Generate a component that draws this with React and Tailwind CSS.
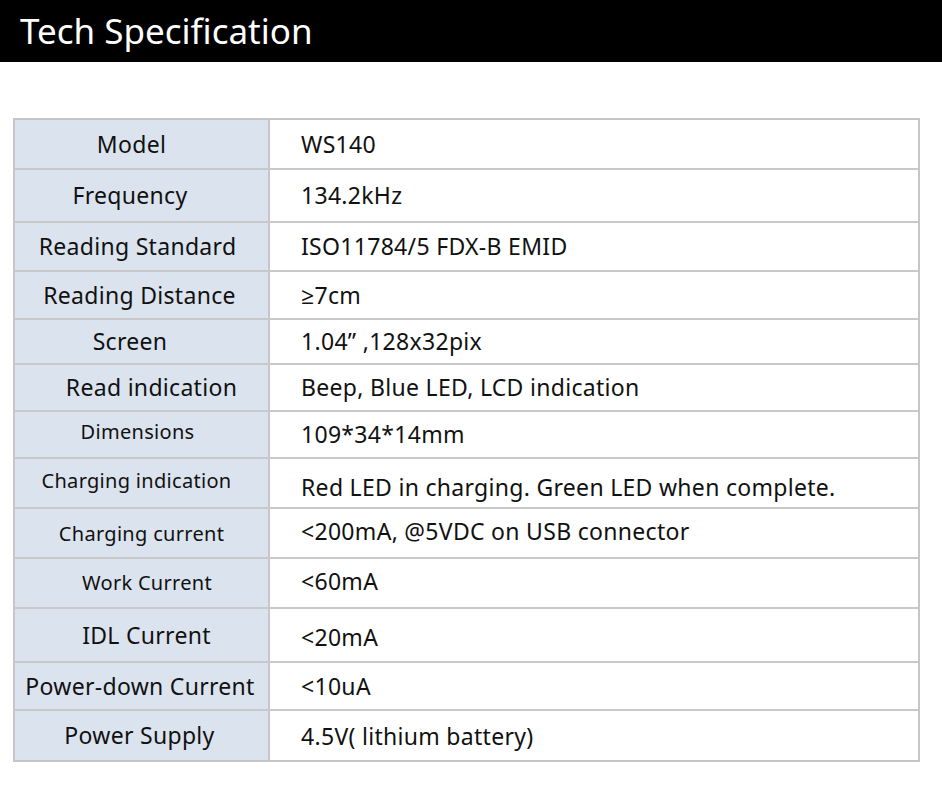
const specs = [
  { label: 'Model', value: 'WS140', h: 'h-[48px]', ls: 'text-[23px] pr-[20px]' },
  { label: 'Frequency', value: '134.2kHz', h: 'h-[53px]', ls: 'text-[23px] pr-[23px]' },
  { label: 'Reading Standard', value: 'ISO11784/5 FDX-B EMID', h: 'h-[49px]', ls: 'text-[23px] pr-[8px]' },
  { label: 'Reading Distance', value: '≥7cm', h: 'h-[48px]', ls: 'text-[23px] pr-[4px]' },
  { label: 'Screen', value: '1.04” ,128x32pix', h: 'h-[45px]', ls: 'text-[23px] pr-[23px]' },
  { label: 'Read indication', value: 'Beep, Blue LED, LCD indication', h: 'h-[47px]', ls: 'text-[23px] pl-[20px]' },
  { label: 'Dimensions', value: '109*34*14mm', h: 'h-[47px]', ls: 'text-[20px] pr-[8px] pb-[6px]' },
  { label: 'Charging indication', value: 'Red LED in charging. Green LED when complete.', h: 'h-[50px]', ls: 'text-[20px] pr-[10px] pb-[4px]', vs: 'pt-[8px]' },
  { label: 'Charging current', value: '<200mA, @5VDC on USB connector', h: 'h-[50px]', ls: 'text-[20px] pt-[2px]', vs: 'pb-[4px]' },
  { label: 'Work Current', value: '<60mA', h: 'h-[50px]', ls: 'text-[20px] pl-[11px]', vs: 'pb-[4px]' },
  { label: 'IDL Current', value: '<20mA', h: 'h-[54px]', ls: 'text-[23px] pl-[10px]', vs: 'pt-[4px]' },
  { label: 'Power-down Current', value: '<10uA', h: 'h-[48px]', ls: 'text-[23px] pr-[3px]' },
  { label: 'Power Supply', value: '4.5V( lithium battery)', h: 'h-[51px]', ls: 'text-[23px] pr-[4px]', vs: 'pt-[2px]' },
];

export default function App() {
  return (
    <div
      className="w-[942px] h-[794px] bg-white text-[#111]"
      style={{ fontFamily: '"Noto Sans", "Open Sans", sans-serif' }}
    >
      <div className="h-[62px] bg-black flex items-center pl-[20px]">
        <h1 className="text-white text-[35px] leading-none pb-[2px]">
          Tech Specification
        </h1>
      </div>

      <div className="mt-[56px] ml-[13px] w-[907px] border-2 border-[#c6c6c6]">
        {specs.map((s, i) => (
          <div
            key={s.label}
            className={`flex ${s.h} ${i > 0 ? 'border-t-2 border-[#c9c9c9]' : ''}`}
          >
            <div
              className={`w-[255px] shrink-0 bg-[#dbe3ee] border-r-2 border-[#c6c6c6] flex items-center justify-center whitespace-nowrap tracking-[0.3px] ${s.ls}`}
            >
              {s.label}
            </div>
            <div className={`flex-1 flex items-center pl-[31px] text-[23px] tracking-[0.3px] whitespace-nowrap ${s.vs || ''}`}>
              {s.value}
            </div>
          </div>
        ))}
      </div>
    </div>
  );
}
